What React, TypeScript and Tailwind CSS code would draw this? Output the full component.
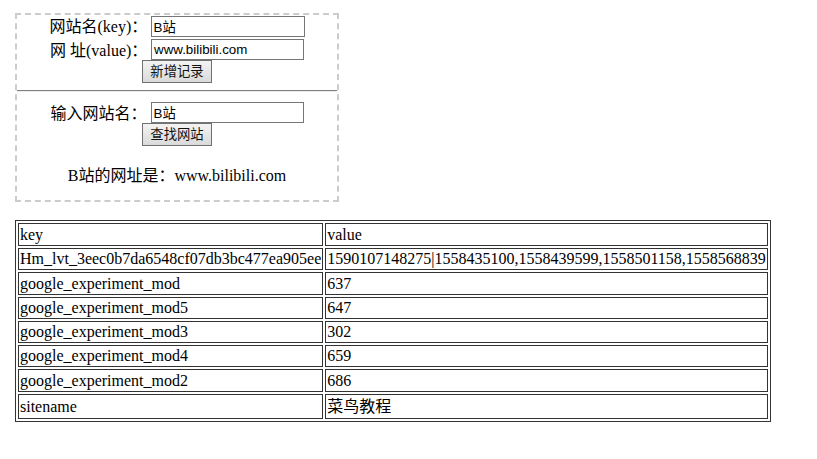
import React from "react";

const rows: [string, string, string][] = [
  ["key", "value", "h-[23px]"],
  ["Hm_lvt_3eec0b7da6548cf07db3bc477ea905ee", "1590107148275|1558435100,1558439599,1558501158,1558568839", "h-[22px]"],
  ["google_experiment_mod", "637", "h-[23px]"],
  ["google_experiment_mod5", "647", "h-[22px]"],
  ["google_experiment_mod3", "302", "h-[22px]"],
  ["google_experiment_mod4", "659", "h-[22px]"],
  ["google_experiment_mod2", "686", "h-[23px]"],
  ["sitename", "菜鸟教程", "h-[25px]"],
];

function TextInput({ value, w }: { value: string; w: string }) {
  return (
    <input
      type="text"
      readOnly
      value={value}
      className={`${w} h-[21px] border border-[#767676] bg-white px-[2px] text-[13.33px] leading-[15px] text-black font-['Liberation_Sans','Noto_Sans_CJK_SC',sans-serif] outline-none`}
    />
  );
}

function Btn({ label }: { label: string }) {
  return (
    <button className="w-[70px] h-[23px] border border-[#707070] bg-linear-to-b from-[#f3f3f3] to-[#dadada] text-[13.33px] leading-[15px] text-[#111] font-['Liberation_Sans','Noto_Sans_CJK_SC',sans-serif]">
      {label}
    </button>
  );
}

export default function App() {
  return (
    <div className="min-h-[459px] w-[817px] bg-white pl-[15px] pt-[13px] text-black font-['Liberation_Serif','Noto_Sans_CJK_SC',serif]">
      <div className="w-[324px] border-2 border-dashed border-[#cccccc] text-center text-[16px] leading-[18px]">
        <div className="flex h-[23px] items-center justify-center">
          <span className="mr-[4px] w-[97px] text-left whitespace-nowrap">网站名(key)：</span>
          <TextInput value="B站" w="w-[154px]" />
        </div>
        <div className="flex h-[22px] items-end justify-center">
          <span className="mr-[4px] w-[97px] text-left whitespace-nowrap">网 址(value)：</span>
          <TextInput value="www.bilibili.com" w="w-[153px]" />
        </div>
        <div className="flex justify-center">
          <Btn label="新增记录" />
        </div>
        <div className="mt-[7px] border-t border-b border-t-[#808080] border-b-[#ececec]" />
        <div className="mt-[9px] flex h-[22px] items-end justify-center">
          <span className="mr-[4px] w-[96px] text-left whitespace-nowrap">输入网站名：</span>
          <TextInput value="B站" w="w-[153px]" />
        </div>
        <div className="flex justify-center">
          <Btn label="查找网站" />
        </div>
        <p className="mt-[21px] mb-[15px] leading-[18px]">B站的网址是：www.bilibili.com</p>
      </div>

      <table className="mt-[18px] border-separate border-spacing-[2px] border border-[#333333] text-[16px]">
        <tbody>
          {rows.map(([k, v, h]) => (
            <tr key={k}>
              <td className={`${h} border border-[#333333] px-px py-0 text-left align-middle whitespace-nowrap leading-[18px]`}>{k}</td>
              <td className={`${h} border border-[#333333] px-px py-0 text-left align-middle whitespace-nowrap leading-[18px]`}>{v}</td>
            </tr>
          ))}
        </tbody>
      </table>
    </div>
  );
}
